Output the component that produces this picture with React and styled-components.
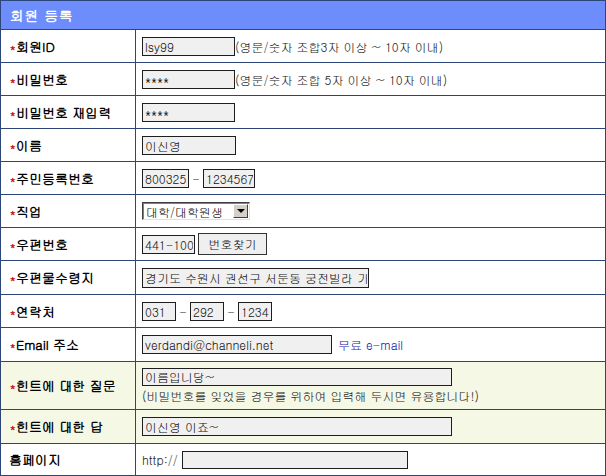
import React from 'react';
import styled, { createGlobalStyle } from 'styled-components';

const GlobalStyle = createGlobalStyle`
	html, body {
		margin: 0;
		padding: 0;
		background: #ffffff;
	}
	body {
		font-family: Gulim, 'Noto Sans CJK KR', 'Noto Sans', sans-serif;
		font-size: 12px;
		color: #222;
	}
`;

const Form = styled.div`
	width: 606px;
	box-sizing: border-box;
	border: 1px solid #2d4679;
	border-bottom-width: 0;
`;

const Header = styled.div`
	height: 28px;
	display: flex;
	align-items: center;
	padding-left: 9px;
	background-color: #6c8dfb;
	border-bottom: 1px solid #2d4679;
	color: #ffffff;
	font-weight: 700;
	font-size: 14px;
	letter-spacing: 0.5px;
`;

const Row = styled.div`
	display: grid;
	grid-template-columns: 135px 1fr;
	height: ${(p) => p.$h || 32}px;
	border-bottom: 1px solid #2d4679;
	background-color: ${(p) => (p.$tint ? '#f6f8e6' : '#ffffff')};
`;

const Label = styled.div`
	display: flex;
	align-items: center;
	padding-left: ${(p) => (p.$plain ? 8 : 9)}px;
	border-right: 1px solid #2d4679;
	font-weight: 800;
	font-size: 13px;
	color: #000;
	white-space: nowrap;
	overflow: hidden;
`;

const Star = styled.span`
	color: #d01010;
	font-size: 11px;
	font-weight: 700;
	width: 6px;
	position: relative;
	top: 1px;
`;

const Field = styled.div`
	display: flex;
	flex-direction: ${(p) => (p.$stack ? 'column' : 'row')};
	align-items: ${(p) => (p.$stack ? 'flex-start' : 'center')};
	justify-content: ${(p) => (p.$stack ? 'center' : 'flex-start')};
	padding-left: 6px;
`;

const Input = styled.input`
	box-sizing: border-box;
	width: ${(p) => p.$w}px;
	height: ${(p) => p.$hh || 19}px;
	margin: 0 0 0 ${(p) => p.$ml || 0}px;
	padding: 0 1px 0 2px;
	border: 1px solid #1e1e1e;
	background: #f0f0f0;
	font-family: Gulim, 'Noto Sans CJK KR', 'Noto Sans', sans-serif;
	font-size: 12px;
	color: #111;
	outline: none;
`;

const Note = styled.span`
	font-size: 12px;
	color: #222;
	white-space: nowrap;
	margin-top: ${(p) => p.$mt || 0}px;
`;

const Dash = styled.span`
	width: ${(p) => p.$w || 14}px;
	text-align: center;
	font-size: 12px;
	color: #222;
`;

const SelectBox = styled.div`
	box-sizing: border-box;
	width: 108px;
	height: 18px;
	display: flex;
	align-items: center;
	justify-content: space-between;
	border-style: solid;
	border-width: 1px;
	border-color: #404040 #e0e0e0 #e0e0e0 #404040;
	box-shadow: inset 1px 1px 0 #808080;
	background: #ffffff;
	padding-left: 3px;
	font-size: 12px;
	color: #111;
`;

const Arrow = styled.span`
	box-sizing: border-box;
	width: 15px;
	height: 14px;
	margin-right: 1px;
	display: flex;
	align-items: center;
	justify-content: center;
	background: #d4d0c8;
	border-style: solid;
	border-width: 1px;
	border-color: #ffffff #404040 #404040 #ffffff;

	&:after {
		content: '';
		border-left: 4px solid transparent;
		border-right: 4px solid transparent;
		border-top: 4px solid #000;
	}
`;

const Button = styled.button`
	box-sizing: border-box;
	width: 69px;
	height: 22px;
	margin: 0 0 0 3px;
	padding: 1px 0 0;
	display: flex;
	align-items: flex-start;
	justify-content: center;
	border: 1px solid #333;
	background: #efefef;
	font-family: Gulim, 'Noto Sans CJK KR', 'Noto Sans', sans-serif;
	font-size: 12px;
	color: #111;
`;

const MailLink = styled.a`
	margin-left: 6px;
	color: #1414a8;
	text-decoration: none;
	font-size: 12px;
`;

const App = () => {
	return (
		<>
			<GlobalStyle />
			<Form>
				<Header>회원 등록</Header>

				<Row>
					<Label><Star>*</Star>회원ID</Label>
					<Field>
						<Input $w={93} defaultValue="lsy99" readOnly />
						<Note>(영문/숫자 조합3자 이상 ~ 10자 이내)</Note>
					</Field>
				</Row>

				<Row>
					<Label><Star>*</Star>비밀번호</Label>
					<Field>
						<Input $w={93} defaultValue="****" readOnly />
						<Note>(영문/숫자 조합 5자 이상 ~ 10자 이내)</Note>
					</Field>
				</Row>

				<Row>
					<Label><Star>*</Star>비밀번호 재입력</Label>
					<Field>
						<Input $w={93} defaultValue="****" readOnly />
					</Field>
				</Row>

				<Row>
					<Label><Star>*</Star>이름</Label>
					<Field>
						<Input $w={94} defaultValue="이신영" readOnly />
					</Field>
				</Row>

				<Row>
					<Label><Star>*</Star>주민등록번호</Label>
					<Field>
						<Input $w={47} defaultValue="800325" readOnly />
						<Dash>-</Dash>
						<Input $w={52} defaultValue="1234567" readOnly />
					</Field>
				</Row>

				<Row>
					<Label><Star>*</Star>직업</Label>
					<Field>
						<SelectBox>
							대학/대학원생
							<Arrow />
						</SelectBox>
					</Field>
				</Row>

				<Row>
					<Label><Star>*</Star>우편번호</Label>
					<Field>
						<Input $w={53} defaultValue="441-100" readOnly />
						<Button type="button">번호찾기</Button>
					</Field>
				</Row>

				<Row $h={33}>
					<Label><Star>*</Star>우편물수령지</Label>
					<Field>
						<Input $w={227} $hh={20} defaultValue="경기도 수원시 권선구 서둔동 궁전빌라 가" readOnly />
					</Field>
				</Row>

				<Row>
					<Label><Star>*</Star>연락처</Label>
					<Field>
						<Input $w={34} defaultValue="031" readOnly />
						<Dash>-</Dash>
						<Input $w={34} defaultValue="292" readOnly />
						<Dash>-</Dash>
						<Input $w={34} defaultValue="1234" readOnly />
					</Field>
				</Row>

				<Row $h={33}>
					<Label><Star>*</Star>Email 주소</Label>
					<Field>
						<Input $w={190} defaultValue="verdandi@channeli.net" readOnly />
						<MailLink href="#">무료 e-mail</MailLink>
					</Field>
				</Row>

				<Row $h={47} $tint>
					<Label><Star>*</Star>힌트에 대한 질문</Label>
					<Field $stack>
						<Input $w={310} $hh={18} defaultValue="이름입니당~" readOnly />
						<Note $mt={1}>(비밀번호를 잊었을 경우를 위하여 입력해 두시면 유용합니다!)</Note>
					</Field>
				</Row>

				<Row $h={33} $tint>
					<Label><Star>*</Star>힌트에 대한 답</Label>
					<Field>
						<Input $w={310} defaultValue="이신영 이죠~" readOnly />
					</Field>
				</Row>

				<Row $h={31}>
					<Label $plain>홈페이지</Label>
					<Field>
						<Note>http://</Note>
						<Input $w={226} $hh={18} $ml={4} readOnly />
					</Field>
				</Row>
			</Form>
		</>
	);
};

export default App;
